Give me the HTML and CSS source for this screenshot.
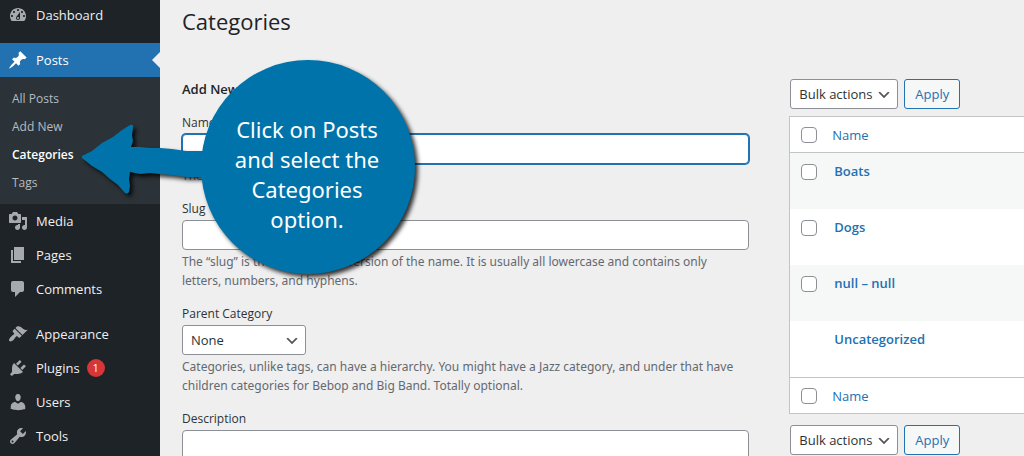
FILE: index.html
```html
<!DOCTYPE html>
<html lang="en">
<head>
    <meta charset="UTF-8">
    <title>Categories</title>
    <link rel="stylesheet" href="styles.css">
</head>
<body>
    <div class="admin">
        <nav class="menu">
            <ul class="menu-list">
                <li><a class="menu-item" href="#">
                    <svg class="icon" viewBox="0 0 20 20"><path d="M3.76 16h12.48c1.1-1.37 1.76-3.11 1.76-5 0-4.42-3.58-8-8-8s-8 3.58-8 8c0 1.89.66 3.63 1.76 5zM10 4c.55 0 1 .45 1 1s-.45 1-1 1-1-.45-1-1 .45-1 1-1zM6 6c.55 0 1 .45 1 1s-.45 1-1 1-1-.45-1-1 .45-1 1-1zm8 0c.55 0 1 .45 1 1s-.45 1-1 1-1-.45-1-1 .45-1 1-1zm-5.37 5.55L12 7v6c0 1.1-.9 2-2 2s-2-.9-2-2c0-.57.24-1.08.63-1.45zM4 10c.55 0 1 .45 1 1s-.45 1-1 1-1-.45-1-1 .45-1 1-1zm12 0c.55 0 1 .45 1 1s-.45 1-1 1-1-.45-1-1 .45-1 1-1zm-5 3c0-.55-.45-1-1-1s-1 .45-1 1 .45 1 1 1 1-.45 1-1z"/></svg>
                    Dashboard</a></li>
                <li class="separator"></li>
                <li><a class="menu-item current" href="#">
                    <svg class="icon" viewBox="0 0 20 20"><path d="M10.44 3.02l1.82-1.82 6.36 6.35-1.83 1.82c-1.05-.68-2.48-.57-3.41.36l-.75.75c-.92.93-1.04 2.35-.35 3.41l-1.83 1.82-2.41-2.41-2.8 2.79c-.42.42-3.38 2.71-3.8 2.29s1.86-3.39 2.28-3.81l2.79-2.79L4.1 9.36l1.83-1.82c1.05.69 2.48.57 3.4-.36l.75-.75c.93-.92 1.05-2.35.36-3.41z"/></svg>
                    Posts</a>
                    <ul class="submenu">
                        <li><a href="#">All Posts</a></li>
                        <li><a href="#">Add New</a></li>
                        <li><a class="selected" href="#">Categories</a></li>
                        <li><a href="#">Tags</a></li>
                    </ul>
                </li>
                <li><a class="menu-item" href="#">
                    <svg class="icon" viewBox="0 0 20 20"><path d="M13 11V4c0-.55-.45-1-1-1h-1.67L9 1H5L3.67 3H2c-.55 0-1 .45-1 1v7c0 .55.45 1 1 1h10c.55 0 1-.45 1-1zM7 4.5c1.38 0 2.5 1.12 2.5 2.5S8.38 9.5 7 9.5 4.5 8.38 4.5 7 5.62 4.5 7 4.5zM14 6h5v10.5c0 1.38-1.12 2.5-2.5 2.5S14 17.88 14 16.5s1.12-2.5 2.5-2.5c.17 0 .34.02.5.05V9h-3V6zm-4 8.05V13h2v3.5c0 1.38-1.12 2.5-2.5 2.5S7 17.88 7 16.5 8.12 14 9.5 14c.17 0 .34.02.5.05z"/></svg>
                    Media</a></li>
                <li><a class="menu-item" href="#">
                    <svg class="icon" viewBox="0 0 20 20"><path d="M6 15V2h10v13H6zm-1 1h8v2H3V5h2v11z"/></svg>
                    Pages</a></li>
                <li><a class="menu-item" href="#">
                    <svg class="icon" viewBox="0 0 20 20"><path d="M5 2h9c1.1 0 2 .9 2 2v7c0 1.1-.9 2-2 2h-2l-5 5v-5H5c-1.1 0-2-.9-2-2V4c0-1.1.9-2 2-2z"/></svg>
                    Comments</a></li>
                <li class="separator"></li>
                <li><a class="menu-item" href="#">
                    <svg class="icon" viewBox="0 0 20 20"><path d="M14.48 11.06L7.41 3.99l1.5-1.5c.5-.56 2.3-.47 3.51.32 1.21.8 1.43 1.28 2.91 2.1 1.18.64 2.45 1.26 4.45.85zm-.71.71L6.7 4.7 4.93 6.47c-.39.39-.39 1.02 0 1.41l1.06 1.06c.39.39.39 1.03 0 1.42-.6.6-1.43 1.11-2.21 1.69-.35.26-.7.53-1.01.84C1.43 14.23.4 16.08 1.4 17.07c.99 1 2.84-.03 4.18-1.36.31-.31.58-.66.85-1.02.57-.78 1.08-1.61 1.69-2.21.39-.39 1.02-.39 1.41 0l1.06 1.06c.39.39 1.02.39 1.41 0z"/></svg>
                    Appearance</a></li>
                <li><a class="menu-item" href="#">
                    <svg class="icon" viewBox="0 0 20 20"><path d="M13.11 4.36L9.87 7.6 8 5.73l3.24-3.24c.35-.34 1.05-.2 1.56.32.52.51.66 1.21.31 1.55zm-8 1.77l.91-1.12 9.01 9.01-1.19.84c-.71.71-2.63 1.16-3.82 1.16H6.14L4.9 17.26c-.59.59-1.54.59-2.12 0-.59-.58-.59-1.53 0-2.12l1.24-1.24v-3.88c0-1.13.4-3.19 1.09-3.89zm7.26 3.97l3.24-3.24c.34-.35 1.04-.21 1.55.31.52.51.66 1.21.31 1.55l-3.24 3.25z"/></svg>
                    Plugins <span class="count">1</span></a></li>
                <li><a class="menu-item" href="#">
                    <svg class="icon" viewBox="0 0 20 20"><path d="M10 9.25c-2.27 0-2.73-3.44-2.73-3.44C7 4.02 7.82 2 9.97 2c2.16 0 2.98 2.02 2.71 3.81 0 0-.41 3.44-2.68 3.44zm0 2.57L12.72 10c2.39 0 4.52 2.33 4.52 4.53v2.49s-3.65 1.13-7.24 1.13c-3.65 0-7.24-1.13-7.24-1.13v-2.49c0-2.25 1.94-4.48 4.47-4.48z"/></svg>
                    Users</a></li>
                <li><a class="menu-item" href="#">
                    <svg class="icon" viewBox="0 0 20 20"><path d="M16.68 9.77c-1.34 1.34-3.3 1.67-4.95.99l-5.41 6.52c-.99.99-2.59.99-3.58 0s-.99-2.59 0-3.57l6.52-5.42c-.68-1.65-.35-3.61.99-4.95 1.28-1.28 3.12-1.62 4.72-1.06l-2.89 2.89 2.82 2.82 2.86-2.87c.53 1.58.18 3.39-1.08 4.65zM3.81 16.21c.4.39 1.04.39 1.43 0 .4-.4.4-1.04 0-1.43-.39-.4-1.03-.4-1.43 0-.39.39-.39 1.03 0 1.43z"/></svg>
                    Tools</a></li>
            </ul>
        </nav>

        <main class="content">
            <h1>Categories</h1>
            <div class="columns">
                <form class="add-form">
                    <h2>Add New</h2>
                    <div class="field">
                        <label for="name">Name</label>
                        <input class="focused" type="text" id="name">
                        <p>The</p>
                    </div>
                    <div class="field">
                        <label for="slug">Slug</label>
                        <input type="text" id="slug">
                        <p>The “slug” is the URL-friendly version of the name. It is usually all lowercase and contains only letters, numbers, and hyphens.</p>
                    </div>
                    <div class="field">
                        <label for="parent">Parent Category</label>
                        <select id="parent">
                            <option>None</option>
                        </select>
                        <p>Categories, unlike tags, can have a hierarchy. You might have a Jazz category, and under that have children categories for Bebop and Big Band. Totally optional.</p>
                    </div>
                    <div class="field">
                        <label for="description">Description</label>
                        <textarea id="description" rows="5"></textarea>
                    </div>
                </form>

                <section class="list">
                    <div class="actions">
                        <select aria-label="Bulk actions">
                            <option>Bulk actions</option>
                        </select>
                        <button type="button">Apply</button>
                    </div>
                    <table>
                        <thead>
                            <tr>
                                <td class="check"><input type="checkbox" aria-label="Select all"></td>
                                <th><a href="#">Name</a></th>
                            </tr>
                        </thead>
                        <tbody>
                            <tr>
                                <td class="check"><input type="checkbox" aria-label="Select Boats"></td>
                                <td><a href="#">Boats</a></td>
                            </tr>
                            <tr>
                                <td class="check"><input type="checkbox" aria-label="Select Dogs"></td>
                                <td><a href="#">Dogs</a></td>
                            </tr>
                            <tr>
                                <td class="check"><input type="checkbox" aria-label="Select null – null"></td>
                                <td><a href="#">null – null</a></td>
                            </tr>
                            <tr>
                                <td class="check"></td>
                                <td><a href="#">Uncategorized</a></td>
                            </tr>
                        </tbody>
                        <tfoot>
                            <tr>
                                <td class="check"><input type="checkbox" aria-label="Select all"></td>
                                <th><a href="#">Name</a></th>
                            </tr>
                        </tfoot>
                    </table>
                    <div class="actions">
                        <select aria-label="Bulk actions">
                            <option>Bulk actions</option>
                        </select>
                        <button type="button">Apply</button>
                    </div>
                </section>
            </div>
        </main>

        <!-- callout bubble with an arrow to the submenu -->
        <div class="callout">
            <svg class="callout-shape" viewBox="0 0 340 220">
                <path d="M2 98 Q1 96 4 95 L12 91 L22 83 L33 77 L42 70 L50 65 Q54 64 53 68 L52 75 L53 81 L51 87 L60 87 L70 88 L80 88 L92 89 L106 91 L125 91 L125 117 L106 117 L92 115 L80 114 L70 113 L60 114 L50 112 L49 119 L50 126 L49 132 Q47 135 44 132 L38 125 L30 119 L22 112 L12 106 Z"/>
                <circle cx="228" cy="107" r="107"/>
            </svg>
            <p>Click on Posts and select the Categories option.</p>
        </div>
    </div>
</body>
</html>
```
FILE: styles.css
```css
* { box-sizing: border-box; }
body { margin: 0; background: #f0f0f1; color: #2c3338; font-family: "Open Sans", "Noto Sans", sans-serif; font-size: 12px; }
ul { list-style: none; margin: 0; padding: 0; }
a { color: #2271b1; text-decoration: none; }
h1, h2, p { margin: 0; }

.admin { display: flex; position: relative; height: 100vh; overflow: hidden; background: #efefef; }

/* side menu */
.menu { flex: 0 0 160px; background: #1d2327; }
.menu-list { margin-top: -2px; }
.menu-item { display: flex; align-items: center; height: 34px; padding-left: 8px; color: #f0f0f1; font-size: 13px; position: relative; }
.icon { width: 20px; height: 20px; margin-right: 8px; fill: #a7aaad; }
.separator { height: 11px; }
.current { background: #2271b1; color: #fff; }
.current .icon { fill: #fff; }
.current::after { content: ""; position: absolute; right: 0; top: 9px; border: 8px solid transparent; border-right-color: #efefef; border-left: 0; }
.submenu { background: #2c3338; padding: 8px 0 7px; }
.submenu a { display: block; padding-left: 12px; line-height: 28px; color: #b5bbc0; }
.submenu .selected { color: #fff; font-weight: 600; }
.count { width: 18px; height: 18px; margin-left: 7px; border-radius: 9px; background: #d63638; color: #fff; font-size: 11px; line-height: 18px; text-align: center; }

/* page */
.content { flex: 1; min-width: 0; padding: 6px 0 0 22px; }
h1 { color: #1d2327; font-size: 22px; font-weight: 400; line-height: 30px; }
.columns { display: grid; grid-template-columns: 29fr 12fr; column-gap: 40px; padding-top: 43px; }

h2 { color: #1d2327; font-size: 13px; font-weight: 600; line-height: 20px; margin-bottom: 14px; }
.field { margin-bottom: 14px; }
label { display: block; line-height: 20px; margin-bottom: 1px; }
.field p { margin-top: 2px; color: #646970; font-family: "Noto Sans", sans-serif; line-height: 19px; }
input[type="text"], textarea, select { display: block; border: 1px solid #8c8f94; border-radius: 4px; background: #fff; color: #2c3338; font-family: inherit; font-size: 13px; }
input[type="text"] { width: 100%; height: 30px; padding: 0 8px; }
textarea { width: 100%; padding: 4px 8px; resize: none; }
input.focused { border-color: #2271b1; box-shadow: 0 0 0 1px #2271b1; outline: none; }
select { width: 108px; height: 30px; padding: 0 24px 0 8px; border-radius: 3px; appearance: none; background: #fff url('data:image/svg+xml;utf8,<svg xmlns="http://www.w3.org/2000/svg" viewBox="0 0 20 20"><path d="M5 6l5 5 5-5 2 1-7 7-7-7 2-1z" fill="%23555"/></svg>') no-repeat right 5px top 55%; background-size: 16px 16px; }
#parent { width: 124px; }

/* list table */
.actions { display: flex; gap: 6px; padding-left: 1px; }
button { height: 30px; padding: 0 10px; border: 1px solid #2271b1; border-radius: 3px; background: #f6f7f7; color: #2271b1; font-family: inherit; font-size: 13px; }
table { width: 100%; margin: 7px 0 11px; border: 1px solid #c3c4c7; border-right: 0; border-spacing: 0; background: #fff; font-size: 13px; }
td, th { padding: 0; text-align: left; font-weight: 400; }
thead td, thead th { height: 36px; border-bottom: 1px solid #c3c4c7; }
tfoot td, tfoot th { height: 36px; border-top: 1px solid #c3c4c7; }
tbody td { height: 56px; padding: 8px 0 0 2px; vertical-align: top; line-height: 20px; font-weight: 600; }
tbody tr:nth-child(odd) { background: #f6f7f7; }
td.check { width: 42px; padding-left: 11px; }
input[type="checkbox"] { display: block; width: 16px; height: 16px; margin: 0; border: 1px solid #8c8f94; border-radius: 4px; background: #fff; appearance: none; }
tbody .check input { margin-top: 3px; }

/* callout */
.callout { position: absolute; left: 80px; top: 60px; width: 340px; }
.callout-shape { display: block; width: 340px; height: 220px; overflow: visible; fill: #0073aa; filter: drop-shadow(3px 3px 2px rgba(0, 0, 0, 0.8)); }
.callout p { position: absolute; left: 147px; top: 54px; width: 160px; color: #fff; font-family: "Noto Sans", sans-serif; font-size: 22px; line-height: 30px; text-align: center; }
```
